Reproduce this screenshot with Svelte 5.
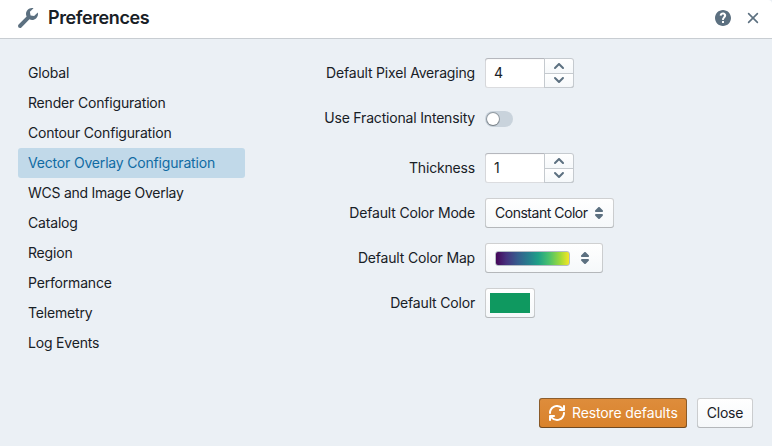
<script>
  const tabs = [
    'Global',
    'Render Configuration',
    'Contour Configuration',
    'Vector Overlay Configuration',
    'WCS and Image Overlay',
    'Catalog',
    'Region',
    'Performance',
    'Telemetry',
    'Log Events'
  ];
  let selected = $state('Vector Overlay Configuration');
  let averaging = $state(4);
  let thickness = $state(1);
  let fractional = $state(false);

  const up = 'M12.71 9.29l-4-4C8.53 5.11 8.28 5 8 5s-.53.11-.71.29l-4 4a1.003 1.003 0 001.42 1.42L8 7.41l3.29 3.29c.18.19.43.3.71.3a1.003 1.003 0 00.71-1.71z';
  const down = 'M12 5c-.28 0-.53.11-.71.29L8 8.59l-3.29-3.3a1.003 1.003 0 00-1.42 1.42l4 4c.18.18.43.29.71.29s.53-.11.71-.29l4-4A1.003 1.003 0 0012 5z';
  const carets = 'M5 7h6a1.003 1.003 0 00.71-1.71l-3-3C8.53 2.11 8.28 2 8 2s-.53.11-.71.29l-3 3A1.003 1.003 0 005 7zm6 2H5a1.003 1.003 0 00-.71 1.71l3 3c.18.18.43.29.71.29s.53-.11.71-.29l3-3A1.003 1.003 0 0011 9z';
</script>

{#snippet icon(d, size = 16)}
  <svg width={size} height={size} viewBox="0 0 16 16"><path {d} fill-rule="evenodd" /></svg>
{/snippet}

{#snippet numeric(value, step)}
  <div class="numeric">
    <div class="field">{value}</div>
    <div class="steps">
      <button aria-label="Increase" onclick={() => step(1)}>{@render icon(up)}</button>
      <button aria-label="Decrease" onclick={() => step(-1)}>{@render icon(down)}</button>
    </div>
  </div>
{/snippet}

<div class="dialog">
  <header>
    <svg width="20" height="20" viewBox="0 0 20 20"><path d="M19.8 4.44L16.13 8.1l-3.55-.71-.71-3.53L15.54.2c-2.01-.53-4.23-.03-5.8 1.53-1.86 1.85-2.23 4.6-1.14 6.83L.59 16.59C.22 16.95 0 17.45 0 18a2 2 0 002 2c.55 0 1.05-.22 1.41-.59l8.03-8.04c2.23 1.05 4.97.67 6.82-1.16 1.57-1.56 2.07-3.77 1.54-5.77z" /></svg>
    <h4>Preferences</h4>
    <button class="bare" aria-label="Help">{@render icon('M8 0C3.58 0 0 3.58 0 8s3.58 8 8 8 8-3.58 8-8-3.58-8-8-8zm1 13H7v-2h2v2zm1.93-6.48c-.14.32-.35.64-.62.97L9.25 8.83c-.12.15-.24.29-.28.42-.04.13-.09.3-.09.52V10H7.12V8.88s.05-.51.21-.71L8.4 6.73c.22-.26.35-.49.44-.68.09-.19.12-.38.12-.58 0-.3-.1-.55-.28-.75-.18-.19-.44-.28-.76-.28-.33 0-.59.1-.78.29-.19.19-.33.46-.4.81-.03.11-.1.15-.2.14l-1.7-.25c-.12-.01-.16-.08-.14-.19.12-.82.46-1.47 1.03-1.94.57-.48 1.32-.72 2.25-.72.47 0 .9.07 1.29.22s.72.34 1 .59c.28.25.49.55.65.89.15.35.22.72.22 1.12s-.07.75-.21 1.12z')}</button>
    <button class="bare close" aria-label="Dismiss"><svg width="20" height="20" viewBox="0 0 20 20"><path class="cross" d="M5.6 5.6l8.8 8.8M14.4 5.6l-8.8 8.8" /></svg></button>
  </header>

  <main>
    <nav>
      {#each tabs as tab}
        <button class="tab" class:selected={tab === selected} class:wide={tab.startsWith('WCS')} onclick={() => (selected = tab)}>{tab}</button>
      {/each}
    </nav>
    <section>
      <div class="row"><span class="label">Default Pixel Averaging</span>{@render numeric(averaging, (n) => (averaging += n))}</div>
      <div class="row frac"><span class="label">Use Fractional Intensity</span>
        <button class="switch" class:on={fractional} aria-label="Use Fractional Intensity" onclick={() => (fractional = !fractional)}><i></i></button>
      </div>
      <div class="row"><span class="label">Thickness</span>{@render numeric(thickness, (n) => (thickness += n))}</div>
      <div class="row"><span class="label">Default Color Mode</span><button class="btn mode"><span>Constant Color</span>{@render icon(carets)}</button></div>
      <div class="row"><span class="label">Default Color Map</span><button class="btn map" aria-label="Color map"><i class="ramp"></i>{@render icon(carets)}</button></div>
      <div class="row"><span class="label">Default Color</span><button class="btn color" aria-label="Color"><i></i></button></div>
    </section>
  </main>

  <footer>
    <button class="btn warn">{@render icon('M14.99 6.99c-.55 0-1 .45-1 1 0 3.31-2.69 6-6 6-1.77 0-3.36-.78-4.46-2h1.46c.55 0 1-.45 1-1s-.45-1-1-1h-4c-.55 0-1 .45-1 1v4c0 .55.45 1 1 1s1-.45 1-1v-1.74a7.95 7.95 0 006 2.74c4.42 0 8-3.58 8-8 0-.55-.45-1-1-1zm0-7c-.55 0-1 .45-1 1v1.74a7.95 7.95 0 00-6-2.74c-4.42 0-8 3.58-8 8 0 .55.45 1 1 1s1-.45 1-1c0-3.31 2.69-6 6-6 1.77 0 3.36.78 4.46 2h-1.46c-.55 0-1 .45-1 1s.45 1 1 1h4c.55 0 1-.45 1-1v-4c0-.55-.45-1-1-1z')}<span>Restore defaults</span></button>
    <button class="btn dismiss"><span>Close</span></button>
  </footer>
</div>

<style>
  .dialog {
    box-sizing: border-box;
    width: 772px;
    height: 446px;
    display: flex;
    flex-direction: column;
    background: #ebf0f5;
    color: #182026;
    font: 14px/18px Inter, "Liberation Sans", sans-serif;
    letter-spacing: -0.18px;
  }
  .dialog :global(*) { box-sizing: border-box; }
  button { font: inherit; letter-spacing: inherit; color: inherit; margin: 0; padding: 0; border: 0; background: none; }
  svg { display: block; flex: none; fill: #5c7080; }
  header {
    flex: none;
    display: flex;
    align-items: center;
    height: 39px;
    padding: 0 9px 2px 18px;
    background: #fff;
    border-bottom: 1px solid #c8cdd2;
    border-top-right-radius: 4px;
  }
  h4 { flex: 1; margin: 0 0 0 10px; font-size: 18px; line-height: 22px; font-weight: 600; letter-spacing: -0.4px; }
  .close { margin-left: 12px; }
  .cross { fill: none; stroke: #5c7080; stroke-width: 1.6; stroke-linecap: round; }
  main { flex: 1; display: flex; padding: 19px 18px 0; }
  nav { width: 227px; display: flex; flex-direction: column; }
  .tab { height: 30px; padding: 0 10px; text-align: left; border-radius: 3px; white-space: nowrap; }
  .wide { letter-spacing: -0.26px; }
  .selected { background: #c1d9e9; color: #106ba3; }
  section { display: flex; flex-direction: column; gap: 15px; }
  .row { display: flex; align-items: center; gap: 10px; height: 30px; }
  .frac { margin-bottom: 5px; }
  .label { width: 230px; text-align: right; white-space: nowrap; }
  .numeric { display: flex; width: 89px; height: 30px; }
  .field {
    width: 60px; padding: 6px 9px; background: #fff; border-radius: 3px 0 0 3px;
    box-shadow: inset 0 0 0 1px rgba(16, 22, 38, .15), inset 0 1px 1px rgba(16, 22, 38, .2);
  }
  .steps { width: 30px; margin-left: -1px; display: flex; flex-direction: column; }
  .steps button {
    height: 15px; display: flex; align-items: center; justify-content: center; overflow: hidden;
    background: linear-gradient(#fff, #f5f8fa); box-shadow: inset 0 0 0 1px #c5cacf;
  }
  .steps button:first-child { height: 16px; border-radius: 0 3px 0 0; }
  .steps button:last-child { padding-bottom: 2px; border-radius: 0 0 3px 0; margin-top: -1px; box-shadow: inset 0 0 0 1px #c5cacf, inset 0 -1px 0 #b5babf; }
  .switch { width: 28px; height: 16px; margin-top: 1px; padding: 2px; border-radius: 8px; background: #c9d3dc; display: flex; }
  .switch i { width: 12px; height: 12px; border-radius: 50%; background: #fff; box-shadow: 0 0 0 1px rgba(16, 22, 26, .3), 0 1px 1px rgba(16, 22, 26, .2); }
  .on { justify-content: flex-end; background: #137cbd; }
  .btn {
    height: 30px; display: flex; align-items: center; border-radius: 3px; white-space: nowrap;
    background: linear-gradient(#fff, #f5f8fa);
    box-shadow: inset 0 0 0 1px rgba(16, 22, 26, .2), inset 0 -1px 0 rgba(16, 22, 26, .1);
  }
  .mode { width: 129px; padding: 0 7px 0 10px; justify-content: space-between; }
  .mode span { letter-spacing: -0.48px; }
  .dismiss span { letter-spacing: -0.2px; }
  .map { width: 118px; padding-left: 10px; gap: 7px; }
  .ramp {
    width: 75px; height: 15px; border-radius: 3px; border: 1px solid #b4bcc4;
    background: linear-gradient(90deg, #440154, #46327e 15%, #365c8d 30%, #277f8e 45%, #1fa187 58%, #4ac16d 72%, #a0da39 87%, #fde725) border-box;
  }
  .color { width: 50px; padding: 5px; }
  .color i { width: 40px; height: 20px; background: #0f9960; }
  footer { flex: none; display: flex; justify-content: flex-end; gap: 10px; padding: 0 19px 18px; }
  .warn {
    width: 148px; padding-left: 10px; gap: 7px; color: #fff; letter-spacing: -0.12px; background: linear-gradient(#de8d3c, #d9822b);
    box-shadow: inset 0 0 0 1px rgba(16, 22, 26, .4), inset 0 -1px 0 rgba(16, 22, 26, .2);
  }
  .warn svg { fill: #fff; }
  .dismiss { width: 56px; justify-content: center; }
</style>
